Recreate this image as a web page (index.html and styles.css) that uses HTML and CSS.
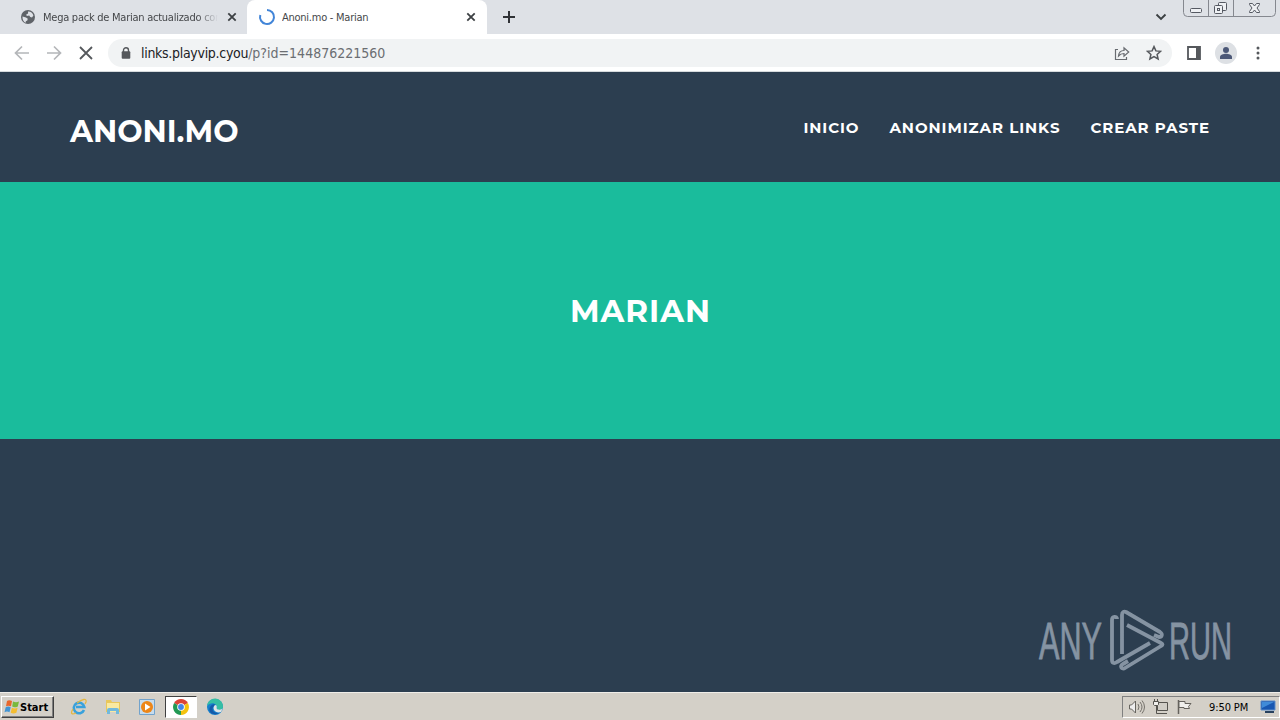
FILE: index.html
```html
<!DOCTYPE html>
<html lang="es">
<head>
    <meta charset="UTF-8">
    <meta name="viewport" content="width=device-width, initial-scale=1.0">
    <title>Anoni.mo - Marian</title>
    <link rel="stylesheet" href="styles.css">
</head>
<body>
    <!-- Browser tabs -->
    <div class="tabs">
        <div class="tab">
            <svg class="favicon" width="16" height="16" viewBox="0 0 16 16">
                <circle cx="8" cy="8" r="7" fill="#5f6368"/>
                <path d="M2.500 7.500 6 8.600l1.800 1.200-.5 1.600-1.500.8v1.600C3.600 13 2.300 10.500 2.500 7.500zM8 2.400c2.400-.2 4.700 1.300 5.400 4L12 8.400l-1.700-.3L9.200 6.500 6.800 7l-.6-1.500 1.900-1z" fill="#dee1e6"/>
            </svg>
            <span class="tab-title faded">Mega pack de Marian actualizado con</span>
            <svg class="tab-close" width="10" height="10" viewBox="0 0 10 10"><path d="M1.300 1.300l7.400 7.400M8.700 1.300L1.300 8.700" stroke="#3c4043" stroke-width="1.800"/></svg>
        </div>
        <div class="tab active">
            <svg class="favicon" width="18" height="18" viewBox="0 0 18 18"><path d="M9 2a7 7 0 1 1-6.700 5" fill="none" stroke="#4285d8" stroke-width="2"/></svg>
            <span class="tab-title">Anoni.mo - Marian</span>
            <svg class="tab-close" width="10" height="10" viewBox="0 0 10 10"><path d="M1.300 1.300l7.400 7.400M8.700 1.300L1.300 8.700" stroke="#3c4043" stroke-width="1.800"/></svg>
        </div>
        <svg class="new-tab" width="12" height="12" viewBox="0 0 12 12"><path d="M6 0v12M0 6h12" stroke="#303236" stroke-width="2"/></svg>
        <svg class="tab-search" width="12" height="8" viewBox="0 0 12 8"><path d="M1.500 1.500L6 6l4.500-4.500" fill="none" stroke="#3c4043" stroke-width="1.900"/></svg>
        <svg class="window-buttons" width="94" height="18" viewBox="0 0 94 18">
            <path d="M.5 0v12.500q0 4 4 4h84q4 0 4-4V0M25.500 0v16.500M50.500 0v16.500" fill="none" stroke="#85888f"/>
            <g fill="#eef0f3" stroke="#555962">
                <rect x="7.500" y="8.500" width="11" height="4" rx="1"/>
                <rect x="35.500" y="2.500" width="8" height="8" rx="1"/>
                <rect x="31.500" y="5.500" width="8" height="8" rx="1"/>
                <rect x="34.500" y="8.500" width="2" height="2"/>
                <path d="M66.500 3.500h3l2 2.500 2-2.500h3v1L74 8l2.500 3.500v1h-3l-2-2.500-2 2.500h-3v-1L69 8l-2.500-3.500z"/>
            </g>
        </svg>
    </div>

    <!-- Address bar -->
    <div class="toolbar">
        <svg class="nav-icon" width="16" height="16" viewBox="0 0 16 16"><path d="M15 8H2M8 1.500L1.500 8 8 14.500" fill="none" stroke="#b4b6b9" stroke-width="1.700"/></svg>
        <svg class="nav-icon" width="16" height="16" viewBox="0 0 16 16"><path d="M1 8h13M8 1.500L14.500 8 8 14.500" fill="none" stroke="#b4b6b9" stroke-width="1.700"/></svg>
        <svg class="nav-icon" width="16" height="16" viewBox="0 0 16 16"><path d="M2 2l12 12M14 2L2 14" stroke="#55585c" stroke-width="1.800"/></svg>
        <div class="address">
            <svg width="10" height="12" viewBox="0 0 10 12"><path d="M2.500 5V3.200a2.500 2.500 0 0 1 5 0V5" fill="none" stroke="#55585c" stroke-width="1.400"/><rect x=".7" y="4.300" width="8.600" height="7.400" rx="1" fill="#55585c"/></svg>
            <span class="url"><b>links.playvip.cyou</b>/p?id=144876221560</span>
            <svg class="share" width="16" height="16" viewBox="0 0 16 16"><path d="M4 4.500H1.500v10h11V12M4.500 11c.3-4 2.500-5.500 5.500-5.500V2.800l4.700 4.200-4.700 4.200V8.500C7.700 8.500 6 9.200 4.500 11z" fill="none" stroke="#686b70" stroke-width="1.200"/></svg>
            <svg width="16" height="16" viewBox="0 0 16 16"><path d="M8 1.600l1.900 4.300 4.700.4-3.500 3.100 1 4.600L8 11.600 3.900 14l1-4.600-3.500-3.100 4.700-.4z" fill="none" stroke="#55585c" stroke-width="1.500"/></svg>
        </div>
        <svg class="side-panel" width="14" height="14" viewBox="0 0 14 14"><path d="M1 1h12v12H1z" fill="none" stroke="#55585c" stroke-width="1.800"/><path d="M9 1h4v12H9z" fill="#55585c"/></svg>
        <svg class="profile" width="22" height="22" viewBox="0 0 22 22"><circle cx="11" cy="11" r="11" fill="#dde0e4"/><circle cx="11" cy="8" r="3" fill="#4c5877"/><path d="M5 17v-2c0-2.200 3.500-3.200 6-3.200s6 1 6 3.200v2z" fill="#4c5877"/></svg>
        <svg class="menu" width="4" height="14" viewBox="0 0 4 14"><g fill="#55585c"><circle cx="2" cy="2" r="1.500"/><circle cx="2" cy="7" r="1.500"/><circle cx="2" cy="12" r="1.500"/></g></svg>
    </div>

    <nav class="navbar">
        <a class="brand">ANONI.MO</a>
        <ul class="links">
            <li>INICIO</li>
            <li>ANONIMIZAR LINKS</li>
            <li>CREAR PASTE</li>
        </ul>
    </nav>

    <header class="masthead">
        <h1>MARIAN</h1>
    </header>

    <section class="content">
        <svg class="watermark" width="200" height="70" viewBox="0 0 200 70">
            <g class="watermark-text">
                <text x="4" y="54" textLength="63" lengthAdjust="spacingAndGlyphs">ANY</text>
                <text x="134" y="54" textLength="63" lengthAdjust="spacingAndGlyphs">RUN</text>
            </g>
            <g class="watermark-logo">
                <path d="M82 14c0-3-5-3-5 1v40c0 3 2 4 5 2l33-19"/>
                <path d="M87 49V10c0-3 2-4 4-3l34 20c3 2 2 5-1 5l-5-2"/>
                <path d="M92 20l34 18c2 1 2 2 0 3L90 63c-3 2-6-2-2-4l5-3"/>
            </g>
        </svg>
    </section>

    <!-- Windows taskbar -->
    <footer class="taskbar">
        <div class="start">
            <svg width="16" height="16" viewBox="0 0 16 16"><path d="M3 2q2-1.500 5 0L7 7.300q-3-1.300-5 0z" fill="#e8672c"/><path d="M9 2.400q3 1.600 6 0l-1.200 5q-3 1.600-5.600.2z" fill="#79b93d"/><path d="M1.700 8.300q2.500-1.500 5 0l-1.200 5q-2.500-1.500-5 0z" fill="#4294d3"/><path d="M7.900 8.700q3 1.500 5.700 0l-1.200 5q-3 1.500-5.700 0z" fill="#f4bd31"/></svg>
            <span>Start</span>
        </div>
        <div class="launchers">
            <svg width="18" height="18" viewBox="0 0 18 18"><path d="M14 12A5.300 5.300 0 1 1 14.300 9H6" fill="none" stroke="#38a1dc" stroke-width="2.600"/><path d="M3 11c-3 5-1 6 3 4M7 5c5-4 10-5 9-1l-1 2" fill="none" stroke="#e4b740" stroke-width="1.300"/></svg>
            <svg width="18" height="18" viewBox="0 0 18 18"><path d="M2 2h5l1 2h8v10H2z" fill="#e9c75b"/><path d="M3 5h12v9H3z" fill="#f9e9a1"/><path d="M3 16v-4q0-2 2-2h8q2 0 2 2v4h-3v-3H6v3z" fill="#72b9dc"/></svg>
            <svg width="18" height="18" viewBox="0 0 18 18"><path d="M1.500 1.500h15v15h-15z" fill="#c7dced" stroke="#72a3cc"/><circle cx="9" cy="9" r="6" fill="#ed8618"/><path d="M7 5.500v7L12.500 9z" fill="#fff"/></svg>
            <div class="chrome-button">
                <svg width="16" height="16" viewBox="0 0 16 16"><path d="M8 8L1.100 4A8 8 0 0 1 14.900 4z" fill="#db4437"/><path d="M8 8l6.900-4A8 8 0 0 1 8 16z" fill="#f4c20d"/><path d="M8 8v8A8 8 0 0 1 1.100 4z" fill="#229954"/><circle cx="8" cy="8" r="3.800" fill="#fff"/><circle cx="8" cy="8" r="2.900" fill="#4285e8"/></svg>
            </div>
            <svg width="18" height="18" viewBox="0 0 18 18"><circle cx="9" cy="9" r="8" fill="#1681cd"/><path d="M1 8a8 8 0 0 1 16 1c0 3-5 4-6 2 1-6-6-8-10-3z" fill="#36bea4"/><path d="M8 8c-4 4 1 9 6 6-5 5-13 1-10-5 1-2 3-3 5-3z" fill="#155aa9"/><path d="M9 7c3 0 1 3 2 4s5 1 6-1l-2 4c-5 2-10-3-6-7z" fill="#e0e5e6"/></svg>
        </div>
        <div class="tray">
            <svg width="18" height="16" viewBox="0 0 18 16"><path d="M1.500 6h2l4-4v12l-4-4h-2z" fill="#eee" stroke="#67655f"/><path d="M10 5q2 3 0 6M12 3q4 5 0 10M14 1.500q5 6.500 0 13" fill="none" stroke="#74716b"/></svg>
            <svg width="18" height="16" viewBox="0 0 18 16"><path d="M5.500 3.500h10v8h-10z" fill="#d0cdc6" stroke="#55534e"/><path d="M7 14.500h8M4.500 6v8.500H8" fill="none" stroke="#55534e"/><path d="M1.500 2.500h5v3l-1 1h-3l-1-1zM2.500 0v2M5.500 0v2" fill="#f0efec" stroke="#55534e"/></svg>
            <svg width="18" height="16" viewBox="0 0 18 16"><path d="M2.500 1v14" stroke="#65625d" stroke-width="1.500"/><path d="M3 2.500h6v2h6l-2.500 3 1 2H8v-1H3z" fill="#f0efec" stroke="#65625d"/></svg>
            <span class="clock">9:50 PM</span>
            <svg width="16" height="14" viewBox="0 0 16 14"><path d="M1 1h14v9H1z" fill="#1857b1" stroke="#5c8dc9"/><path d="M2 2h12L2 8z" fill="#408bd8"/><path d="M5 12h9" stroke="#28415e" stroke-width="2"/></svg>
        </div>
    </footer>
</body>
</html>
```
FILE: styles.css
```css
* {
    box-sizing: border-box;
}

body {
    display: flex;
    flex-direction: column;
    height: 720px;
    margin: 0;
    overflow: hidden;
    background-color: #2c3e50;
    font-family: "DejaVu Sans Condensed", "DejaVu Sans", sans-serif;
}

svg {
    display: block;
    flex-shrink: 0;
}

.tabs {
    display: flex;
    align-items: center;
    height: 34px;
    background-color: #dee1e6;
}

.tab {
    display: flex;
    align-items: center;
    width: 247px;
    height: 34px;
    padding: 0 10px 0 20px;
    font-size: 11px;
    color: #45474a;
}

.tab.active {
    width: 240px;
    padding: 0 11px;
    background-color: #fff;
    border-radius: 8px 8px 0 0;
}

.tab-title {
    flex: 1;
    margin-left: 7px;
    overflow: hidden;
    white-space: nowrap;
    letter-spacing: -0.25px;
}

.active .tab-title {
    margin-left: 6px;
}

.faded {
    mask-image: linear-gradient(to right, #000 88%, transparent);
}

.tab-close {
    margin-left: 9px;
}

.new-tab {
    margin-left: 16px;
}

.tab-search {
    margin-left: auto;
}

.window-buttons {
    align-self: flex-start;
    margin: 0 3px 0 16px;
}

.toolbar {
    display: flex;
    align-items: center;
    height: 38px;
    padding-left: 14px;
    background-color: #fff;
    border-bottom: 1px solid #d6dadd;
}

.nav-icon {
    margin-right: 16px;
}

.address {
    display: flex;
    align-items: center;
    width: 1064px;
    height: 28px;
    margin-left: -2px;
    padding: 0 10px 0 13px;
    border-radius: 14px;
    background-color: #f1f3f4;
}

.url {
    margin-left: 10px;
    font-size: 14px;
    color: #6b6e72;
}

.url b {
    color: #202124;
    font-weight: normal;
    letter-spacing: -0.3px;
}

.share {
    margin: 0 16px 0 auto;
}

.side-panel {
    margin-left: 15px;
}

.profile {
    margin-left: 14px;
}

.menu {
    margin-left: 19px;
}

.navbar {
    display: flex;
    justify-content: space-between;
    height: 110px;
    padding: 0 70px;
    color: #fff;
    font-family: Montserrat, Inter, sans-serif;
    font-weight: 700;
}

.brand {
    padding-top: 42px;
    font-size: 30px;
    line-height: 36px;
}

.links {
    display: flex;
    gap: 30px;
    margin: 0;
    padding: 46px 0 0;
    list-style: none;
    font-size: 15px;
    line-height: 20px;
    letter-spacing: 0.94px;
    white-space: nowrap;
}

.masthead {
    height: 257px;
    padding: 111px 0 0 1px;
    background-color: #1abc9c;
    color: #fff;
    text-align: center;
    font-family: Montserrat, Inter, sans-serif;
}

.masthead h1 {
    margin: 0;
    font-size: 31px;
    line-height: 36px;
    letter-spacing: 1px;
}

.content {
    display: flex;
    flex: 1;
    align-items: flex-end;
    justify-content: flex-end;
    padding: 0 45px 17px;
}

.watermark {
    overflow: visible;
}

.watermark-text {
    fill: #8593a2;
    stroke: #8593a2;
    stroke-width: 0.8px;
    font-family: "Liberation Sans Narrow", "Liberation Sans", sans-serif;
    font-size: 51px;
}

.watermark-logo {
    fill: none;
    stroke: #8593a2;
    stroke-width: 3.8px;
    stroke-linejoin: round;
}

.taskbar {
    display: flex;
    align-items: center;
    height: 28px;
    padding: 1px 0 0 1px;
    border-top: 1px solid #efede9;
    background-color: #d4d0c8;
}

.start {
    display: flex;
    align-items: center;
    width: 53px;
    height: 22px;
    padding-left: 2px;
    border: 1px solid;
    border-color: #fff #404040 #404040 #fff;
    box-shadow: inset -1px -1px #808080;
    font-size: 11px;
    font-weight: bold;
}

.launchers {
    display: flex;
    align-items: center;
    gap: 16px;
    margin-left: 16px;
}

.chrome-button {
    display: flex;
    align-items: center;
    justify-content: center;
    width: 32px;
    height: 22px;
    margin: 0 -7px;
    border: 1px solid;
    border-color: #404040 #fff #fff #404040;
    background-color: #fff;
}

.tray {
    display: flex;
    align-items: center;
    gap: 6px;
    width: 158px;
    height: 22px;
    margin-left: auto;
    padding-left: 5px;
    border: 1px solid;
    border-color: #808080 #fff #fff #808080;
}

.clock {
    width: 42px;
    margin: 0 3px 0 9px;
    font-size: 11px;
    white-space: nowrap;
    letter-spacing: -0.1px;
}
```
